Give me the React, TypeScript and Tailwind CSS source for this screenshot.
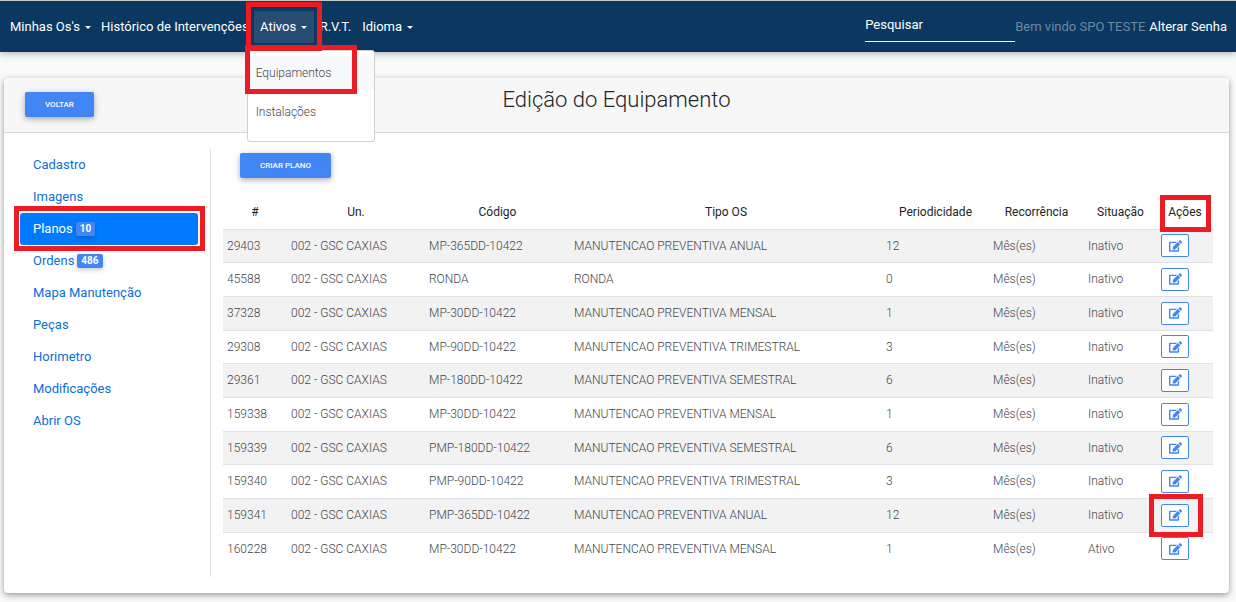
import React, { useState } from 'react';
import { FaEdit } from 'react-icons/fa';

interface Plano {
  id: number;
  unidade: string;
  codigo: string;
  tipo: string;
  periodicidade: number;
  recorrencia: string;
  situacao: string;
}

const UNIDADE = '002 - GSC CAXIAS';

const planos: Plano[] = [
  { id: 29403, unidade: UNIDADE, codigo: 'MP-365DD-10422', tipo: 'MANUTENCAO PREVENTIVA ANUAL', periodicidade: 12, recorrencia: 'Mês(es)', situacao: 'Inativo' },
  { id: 45588, unidade: UNIDADE, codigo: 'RONDA', tipo: 'RONDA', periodicidade: 0, recorrencia: 'Mês(es)', situacao: 'Inativo' },
  { id: 37328, unidade: UNIDADE, codigo: 'MP-30DD-10422', tipo: 'MANUTENCAO PREVENTIVA MENSAL', periodicidade: 1, recorrencia: 'Mês(es)', situacao: 'Inativo' },
  { id: 29308, unidade: UNIDADE, codigo: 'MP-90DD-10422', tipo: 'MANUTENCAO PREVENTIVA TRIMESTRAL', periodicidade: 3, recorrencia: 'Mês(es)', situacao: 'Inativo' },
  { id: 29361, unidade: UNIDADE, codigo: 'MP-180DD-10422', tipo: 'MANUTENCAO PREVENTIVA SEMESTRAL', periodicidade: 6, recorrencia: 'Mês(es)', situacao: 'Inativo' },
  { id: 159338, unidade: UNIDADE, codigo: 'MP-30DD-10422', tipo: 'MANUTENCAO PREVENTIVA MENSAL', periodicidade: 1, recorrencia: 'Mês(es)', situacao: 'Inativo' },
  { id: 159339, unidade: UNIDADE, codigo: 'PMP-180DD-10422', tipo: 'MANUTENCAO PREVENTIVA SEMESTRAL', periodicidade: 6, recorrencia: 'Mês(es)', situacao: 'Inativo' },
  { id: 159340, unidade: UNIDADE, codigo: 'PMP-90DD-10422', tipo: 'MANUTENCAO PREVENTIVA TRIMESTRAL', periodicidade: 3, recorrencia: 'Mês(es)', situacao: 'Inativo' },
  { id: 159341, unidade: UNIDADE, codigo: 'PMP-365DD-10422', tipo: 'MANUTENCAO PREVENTIVA ANUAL', periodicidade: 12, recorrencia: 'Mês(es)', situacao: 'Inativo' },
  { id: 160228, unidade: UNIDADE, codigo: 'MP-30DD-10422', tipo: 'MANUTENCAO PREVENTIVA MENSAL', periodicidade: 1, recorrencia: 'Mês(es)', situacao: 'Ativo' },
];

const menuLateral = [
  { label: 'Cadastro' },
  { label: 'Imagens' },
  { label: 'Planos', total: 10 },
  { label: 'Ordens', total: 486 },
  { label: 'Mapa Manutenção' },
  { label: 'Peças' },
  { label: 'Horimetro' },
  { label: 'Modificações' },
  { label: 'Abrir OS' },
];

const PLANO_DESTACADO = 159341;

function Caret() {
  return (
    <span className="ml-[5px] inline-block border-x-[3px] border-t-[3px] border-x-transparent border-t-white align-middle" />
  );
}

// Moldura vermelha que marca os passos do tutorial
function Destaque({ className }: { className: string }) {
  return <span aria-hidden="true" className={`pointer-events-none absolute z-20 border-[5px] border-[#ed1c24] ${className}`} />;
}

function Navbar() {
  const [aberto, setAberto] = useState(true);

  return (
    <nav className="relative z-10 flex h-[52px] items-center border-t border-[#c3c8c9] bg-[#0a3861] pr-[9px] pl-[5px] text-[13px] whitespace-nowrap text-white shadow-[0_2px_5px_rgba(0,0,0,0.16),0_2px_10px_rgba(0,0,0,0.12)]">
      <button type="button" className="px-[5px]">
        Minhas Os's
        <Caret />
      </button>
      <a href="#historico" className="px-[5px]">Histórico de Intervenções</a>
      <div className="relative">
        <button
          type="button"
          aria-expanded={aberto}
          onClick={() => setAberto(!aberto)}
          className="h-8 w-[60px] bg-[#274c72]"
        >
          Ativos
          <Caret />
        </button>
        <Destaque className="-top-[9px] -right-[8px] -bottom-[8px] -left-[8px]" />
        {aberto && (
          <div className="absolute top-[39px] -left-[7px] w-32 rounded-[3px] border border-[#d0d0d0] bg-white pt-[5px] pb-3 text-[12px] font-light text-[#42474c]">
            <a href="#equipamentos" className="relative block bg-[#f8f9fa] px-2 py-[7px] leading-5">
              Equipamentos
              <Destaque className="-top-[11px] right-[17px] -bottom-1 -left-[3px]" />
            </a>
            <a href="#instalacoes" className="mt-[5px] block px-2 py-[7px] leading-5">Instalações</a>
          </div>
        )}
      </div>
      <a href="#rvt" className="px-[6px]">R.V.T.</a>
      <button type="button" className="px-[5px]">
        Idioma
        <Caret />
      </button>
      <input
        type="text"
        aria-label="Pesquisar"
        placeholder="Pesquisar"
        className="ml-auto h-[31px] w-[150px] border-b border-white bg-transparent pb-[3px] outline-none placeholder:text-white"
      />
      <span className="text-[#6c88a0]">Bem vindo SPO TESTE</span>
      <a href="#senha" className="ml-1">Alterar Senha</a>
    </nav>
  );
}

function Botao({ children }: { children: React.ReactNode }) {
  return (
    <button
      type="button"
      className="block h-[25px] rounded-[2px] bg-[#4285f4] px-5 text-[8px] font-medium text-white uppercase shadow-[0_2px_5px_rgba(0,0,0,0.2),0_2px_8px_rgba(0,0,0,0.14)]"
    >
      {children}
    </button>
  );
}

function MenuLateral() {
  const [ativo, setAtivo] = useState('Planos');

  return (
    <aside className="w-[191px] shrink-0 border-r border-[#dee2e6] pr-3">
      {menuLateral.map((item) => (
        <a
          key={item.label}
          href={`#${item.label}`}
          onClick={() => setAtivo(item.label)}
          className={`relative flex h-8 items-center rounded-[3px] px-[13px] text-[13px] ${
            item.label === ativo ? 'bg-[#007bff] text-white' : 'text-[#0c6fd6]'
          }`}
        >
          {item.label}
          {item.total && (
            <span className="ml-[3px] rounded-[2px] bg-[#4285f4] px-1 text-[10px] leading-[14px] font-bold text-white shadow-[0_2px_5px_rgba(0,0,0,0.2)]">
              {item.total}
            </span>
          )}
          {item.label === 'Planos' && <Destaque className="-top-[7px] -right-[7px] -bottom-[6px] -left-[6px]" />}
        </a>
      ))}
    </aside>
  );
}

function TabelaPlanos() {
  return (
    <table className="mt-[17px] w-full table-fixed text-left text-[12px] text-[#212529]">
      <colgroup>
        <col className="w-[64px]" />
        <col className="w-[138px]" />
        <col className="w-[145px]" />
        <col className="w-[312px]" />
        <col className="w-[107px]" />
        <col className="w-[95px]" />
        <col className="w-[73px]" />
        <col className="w-[56px]" />
      </colgroup>
      <thead>
        <tr className="h-[34px] text-center">
          <th className="font-normal">#</th>
          <th className="font-normal">Un.</th>
          <th className="font-normal">Código</th>
          <th className="font-normal">Tipo OS</th>
          <th className="font-normal">Periodicidade</th>
          <th className="font-normal">Recorrência</th>
          <th className="font-normal">Situação</th>
          <th className="relative font-normal">
            Ações
            <Destaque className="top-0 right-[2px] -bottom-[3px] left-[3px]" />
          </th>
        </tr>
      </thead>
      <tbody className="font-light whitespace-nowrap text-[#42474c]">
        {planos.map((plano) => (
          <tr key={plano.id} className="h-[34px] border-t border-[#dee2e6] odd:bg-[#f2f2f2] nth-[3n+1]:h-[33px]">
            <td className="px-1">{plano.id}</td>
            <td className="px-1">{plano.unidade}</td>
            <td className="px-1">{plano.codigo}</td>
            <td className="px-1">{plano.tipo}</td>
            <td className="px-1">{plano.periodicidade}</td>
            <td className="px-1">{plano.recorrencia}</td>
            <td className="px-1">{plano.situacao}</td>
            <td className="px-1">
              <div className="relative w-7">
                <button
                  type="button"
                  aria-label={`Editar plano ${plano.id}`}
                  className="flex h-[23px] w-7 items-center justify-center rounded-[2px] border border-[#4285f4] bg-white text-[#4285f4]"
                >
                  <FaEdit className="h-3 w-[13px]" />
                </button>
                {plano.id === PLANO_DESTACADO && (
                  <Destaque className="-top-[10px] -right-[14px] -bottom-[10px] -left-[12px]" />
                )}
              </div>
            </td>
          </tr>
        ))}
      </tbody>
    </table>
  );
}

export default function App() {
  return (
    <div className="min-h-screen bg-[#fafafa] pb-2 font-['Roboto',sans-serif]">
      <Navbar />
      <main className="mt-[26px] mr-[7px] ml-1 rounded-[4px] bg-white shadow-[0_2px_5px_rgba(0,0,0,0.26),0_2px_10px_rgba(0,0,0,0.16)]">
        <header className="grid grid-cols-[1fr_auto_1fr] items-start rounded-t-[4px] border-b border-[#d9d9d9] bg-[#f7f7f7] px-[21px] pt-[14px] pb-[15px]">
          <div>
            <Botao>Voltar</Botao>
          </div>
          <h1 className="text-[22px] leading-4 font-light text-[#212529]">Edição do Equipamento</h1>
        </header>
        <div className="flex p-4">
          <MenuLateral />
          <section className="min-w-0 flex-1 pt-1 pb-3 pl-3">
            <div className="flex pl-[17px]">
              <Botao>Criar Plano</Botao>
            </div>
            <TabelaPlanos />
          </section>
        </div>
      </main>
    </div>
  );
}
